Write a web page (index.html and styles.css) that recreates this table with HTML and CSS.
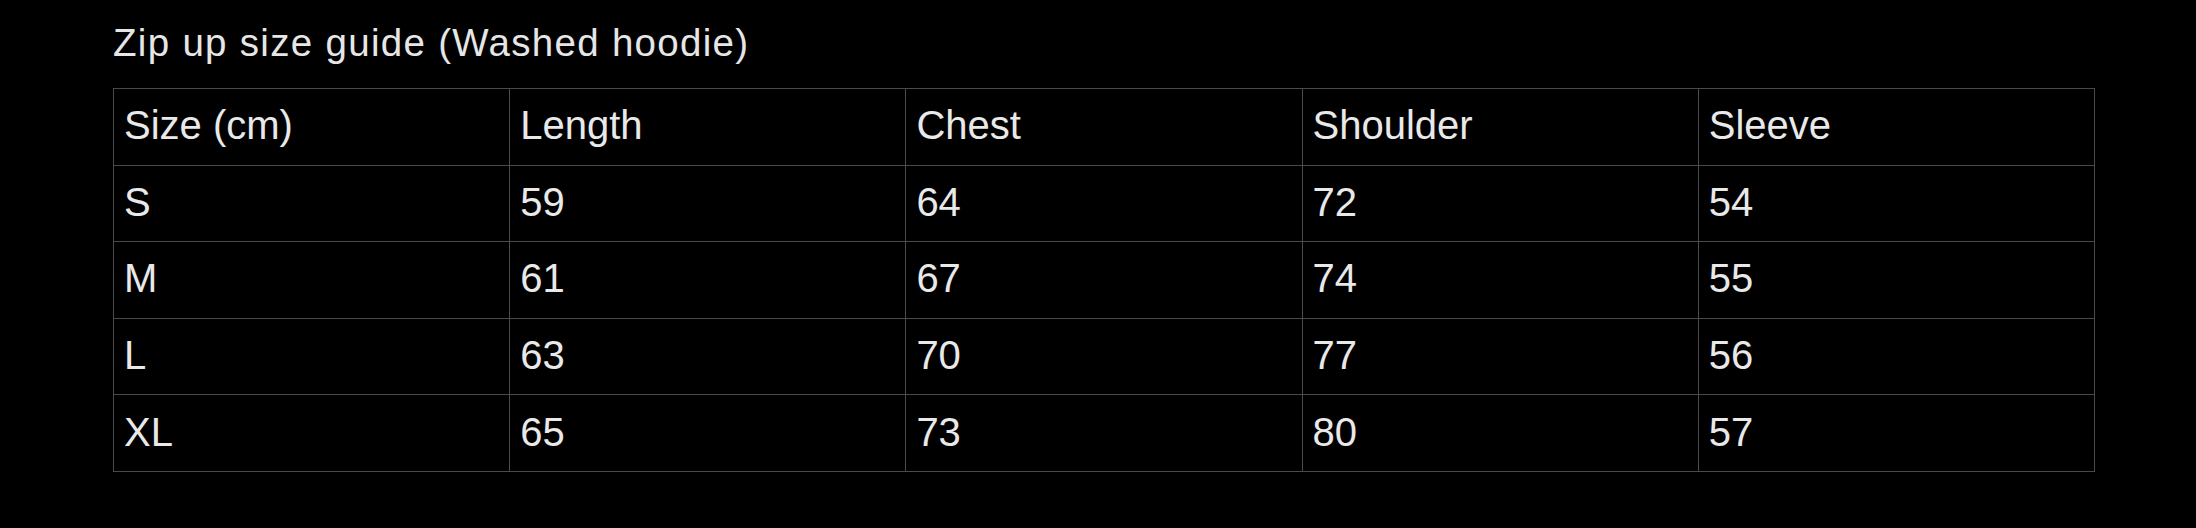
FILE: index.html
```html
<!DOCTYPE html>
<html lang="en">
<head>
<meta charset="utf-8">
<title>Zip up size guide</title>
<link rel="stylesheet" href="styles.css">
</head>
<body>
<main class="page">
  <h1 class="title">Zip up size guide (Washed hoodie)</h1>
  <table class="sizes">
    <tbody>
      <tr><td>Size (cm)</td><td>Length</td><td>Chest</td><td>Shoulder</td><td>Sleeve</td></tr>
      <tr><td>S</td><td>59</td><td>64</td><td>72</td><td>54</td></tr>
      <tr><td>M</td><td>61</td><td>67</td><td>74</td><td>55</td></tr>
      <tr><td>L</td><td>63</td><td>70</td><td>77</td><td>56</td></tr>
      <tr><td>XL</td><td>65</td><td>73</td><td>80</td><td>57</td></tr>
    </tbody>
  </table>
</main>
</body>
</html>
```
FILE: styles.css
```css
html, body {
  margin: 0;
  background: #000;
}
body {
  width: 2196px;
  height: 528px;
  overflow: hidden;
  font-family: "Liberation Sans", Arial, sans-serif;
  color: #e9e9e9;
}
.page {
  padding: 21px 0 0 113px;
}
.title {
  margin: 0 0 23px 0;
  font-size: 38.5px;
  font-weight: 400;
  line-height: 44px;
  letter-spacing: 1.3px;
  color: #e6e6e6;
}
.sizes {
  border-collapse: collapse;
  table-layout: fixed;
  width: 1982px;
  height: 384px;
}
.sizes td {
  border: 1px solid #4a4a4a;
  padding: 0 10px 3px 10px;
  font-size: 40px;
  line-height: 46px;
  vertical-align: middle;
  white-space: nowrap;
}
```
